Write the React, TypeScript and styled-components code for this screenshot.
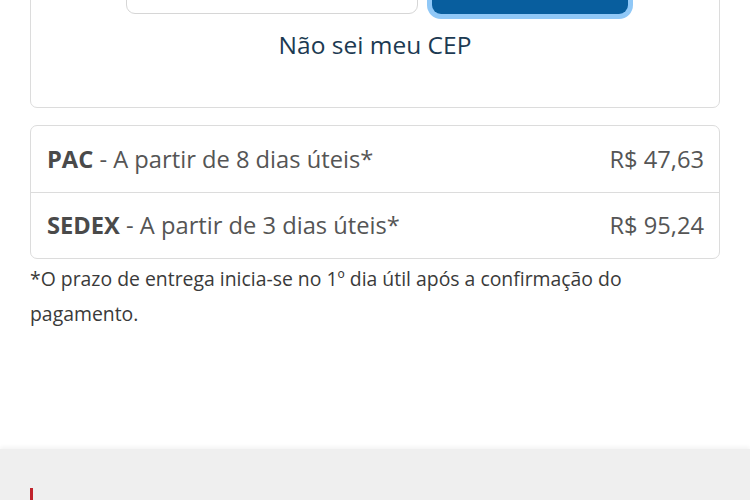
import styled, { createGlobalStyle } from "styled-components";

const GlobalStyle = createGlobalStyle`
  * { box-sizing: border-box; }
  html, body {
    margin: 0;
    height: 100%;
    overflow: hidden;
    background: #fff;
    font-family: "Open Sans", "Noto Sans", sans-serif;
  }
`;

const Page = styled.div`
  display: flex;
  flex-direction: column;
  margin-top: -60px;
`;

const Content = styled.main`
  padding: 0 30px 118px;
`;

const Card = styled.section`
  border: 1px solid #dcdcdc;
  border-radius: 7px;
  background: #fff;
`;

const CepCard = styled(Card)`
  padding: 23px 0 46px;
  display: flex;
  flex-direction: column;
  align-items: center;
`;

const CepRow = styled.form`
  display: flex;
  gap: 14px;
  height: 50px;
  margin-left: 4px;
`;

const CepInput = styled.input`
  width: 292px;
  border: 1px solid #d6d6d6;
  border-radius: 9px;
  outline: none;
  font: inherit;
  font-size: 20px;
  padding: 0 14px;
`;

const SearchBtn = styled.button`
  width: 196px;
  border: none;
  border-radius: 9px;
  background: #085e9e;
  box-shadow: 0 0 0 5px #90c8f7;
  color: #fff;
  font: inherit;
`;

const UnknownCep = styled.a`
  margin-top: 15px;
  font-size: 24.5px;
  line-height: 32px;
  color: #1c3a52;
  text-decoration: none;
`;

const ShippingCard = styled(Card)`
  margin-top: 17px;
`;

const Option = styled.div`
  display: flex;
  justify-content: space-between;
  align-items: center;
  height: 66px;
  padding: 0 15px 1px 16px;
  font-size: 23.7px;
  color: #555;
  & + & {
    border-top: 1px solid #dcdcdc;
  }
`;

const Carrier = styled.b`
  font-weight: 700;
  color: #4a4a4a;
`;

const Note = styled.p`
  margin: 2px 0 0;
  font-size: 19.4px;
  line-height: 35px;
  color: #3a3a3a;
`;

const Footer = styled.footer`
  height: 53px;
  background: #efefef;
  box-shadow: 0 -2px 4px rgba(0, 0, 0, 0.05);
  padding: 39px 30px 0;
`;

const Accent = styled.span`
  display: block;
  width: 3px;
  height: 100%;
  background: #c0232c;
`;

const options = [
  { name: "PAC", days: 8, price: "R$ 47,63" },
  { name: "SEDEX", days: 3, price: "R$ 95,24" },
];

export default function App() {
  return (
    <>
      <GlobalStyle />
      <Page>
        <Content>
          <CepCard>
            <CepRow>
              <CepInput type="text" />
              <SearchBtn type="button" />
            </CepRow>
            <UnknownCep href="#">Não sei meu CEP</UnknownCep>
          </CepCard>

          <ShippingCard>
            {options.map((o) => (
              <Option key={o.name}>
                <span>
                  <Carrier>{o.name}</Carrier> - A partir de {o.days} dias úteis*
                </span>
                <span>{o.price}</span>
              </Option>
            ))}
          </ShippingCard>

          <Note>
            *O prazo de entrega inicia-se no 1º dia útil após a confirmação do
            pagamento.
          </Note>
        </Content>
        <Footer>
          <Accent />
        </Footer>
      </Page>
    </>
  );
}
